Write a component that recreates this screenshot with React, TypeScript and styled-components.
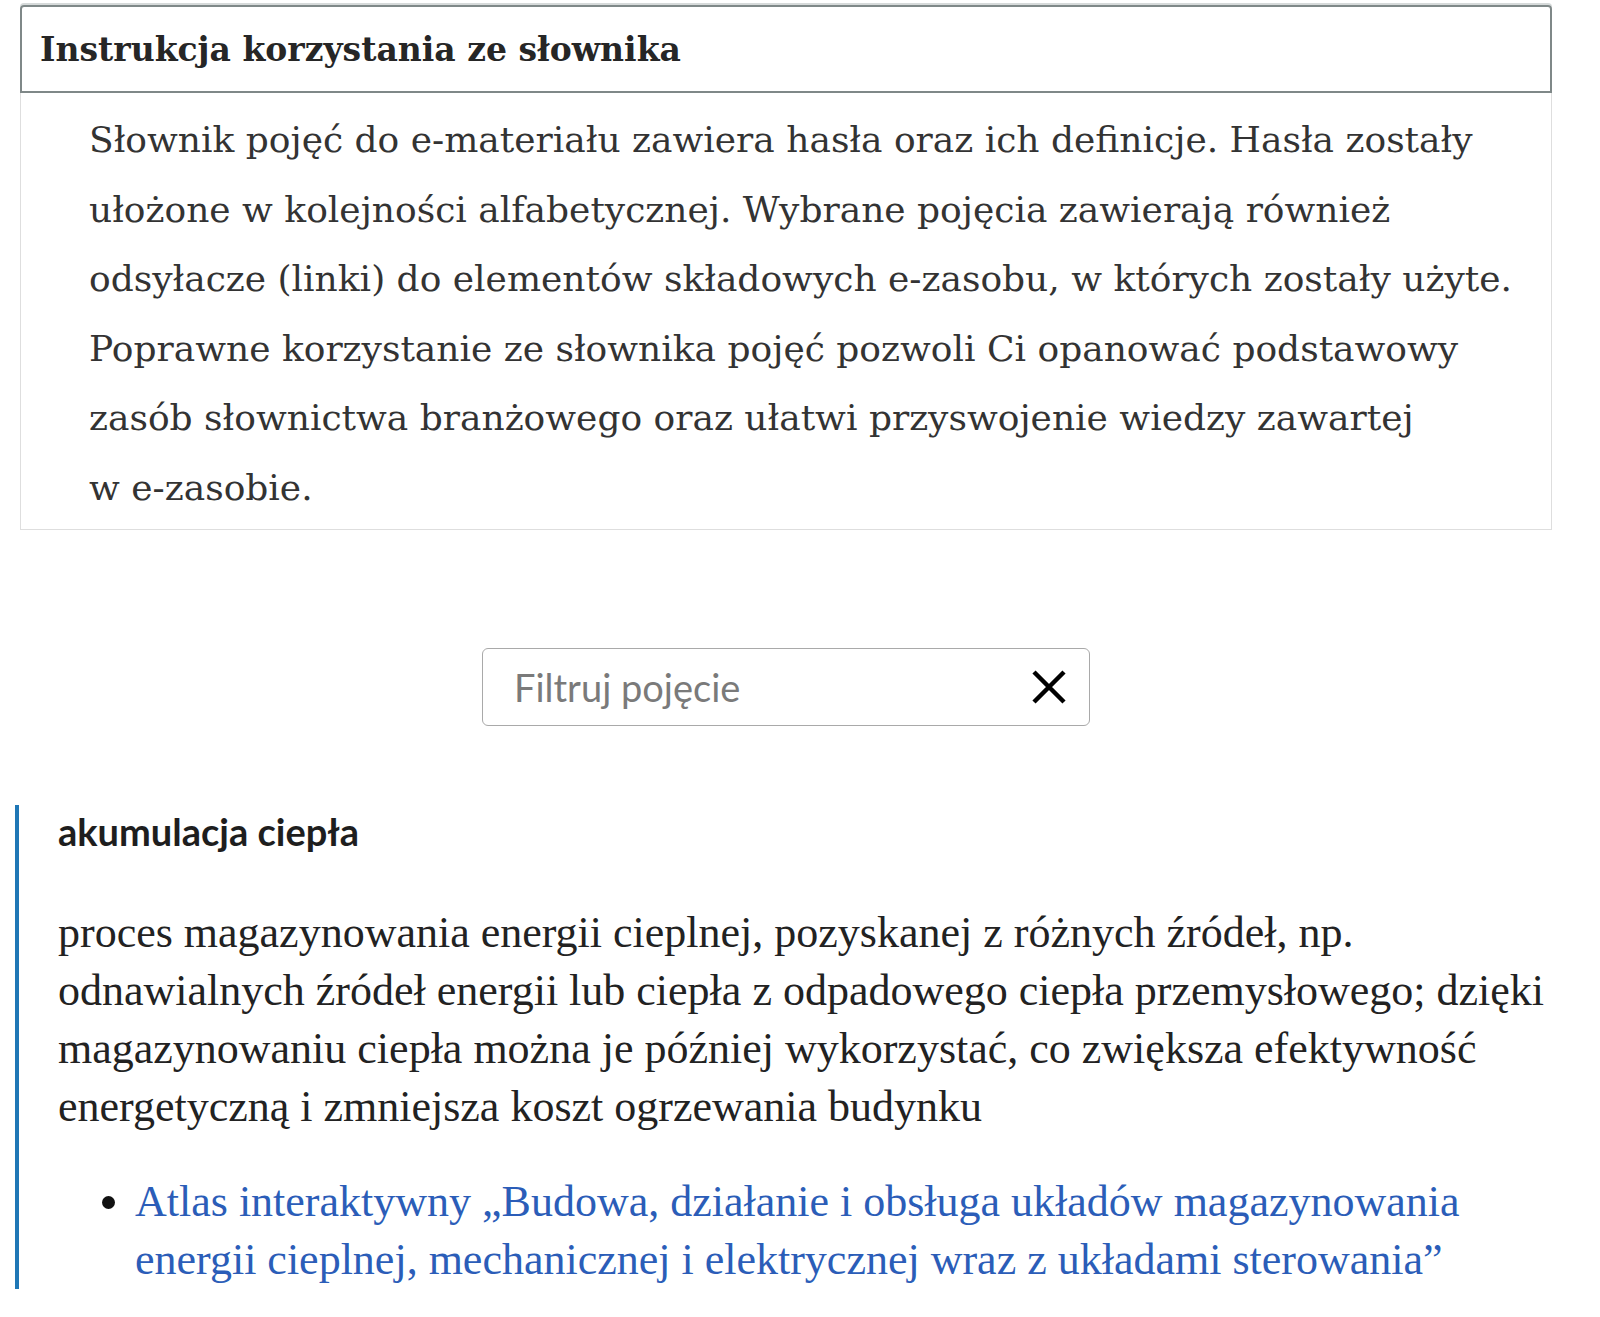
import React from "react";
import styled, { createGlobalStyle } from "styled-components";

const GlobalStyle = createGlobalStyle`
  html, body {
    margin: 0;
    padding: 0;
    background: #ffffff;
  }
  body {
    font-family: "DejaVu Serif", serif;
  }
`;

const Page = styled.main`
  width: 1532px;
  padding: 5px 0 0 20px;
`;

const InfoBox = styled.section`
  display: flex;
  flex-direction: column;
`;

const InfoHeader = styled.h2`
  margin: 0;
  height: 84px;
  display: flex;
  align-items: center;
  padding-left: 18px;
  border: 2px solid #7f8888;
  border-radius: 4px 4px 0 0;
  box-shadow: 0 -2px 0 #d6dada;
  font-family: "DejaVu Serif", serif;
  font-weight: 700;
  font-size: 33px;
  color: #262626;
`;

const InfoBody = styled.div`
  border: 1px solid #dedede;
  border-top: none;
  padding: 12px 10px 7px 68px;
  font-family: "DejaVu Serif", serif;
  font-size: 36px;
  line-height: 69.5px;
  color: #333333;
`;

const FilterRow = styled.div`
  display: flex;
  justify-content: center;
  padding: 118px 0 79px;
`;

const FilterBox = styled.label`
  width: 608px;
  height: 78px;
  box-sizing: border-box;
  border: 1px solid #a9a9a9;
  border-radius: 6px;
  display: flex;
  align-items: center;
  padding: 0 20px 0 29px;
`;

const FilterInput = styled.input`
  flex: 1;
  min-width: 0;
  border: none;
  outline: none;
  background: transparent;
  font-family: Lato, sans-serif;
  font-size: 38px;
  color: #222;
  &::placeholder {
    color: #7a7a7a;
  }
`;

const ClearButton = styled.button`
  border: none;
  background: none;
  padding: 0;
  width: 40px;
  height: 40px;
  display: flex;
  align-items: center;
  justify-content: center;
  cursor: pointer;
`;

const Term = styled.article`
  margin-left: -5px;
  border-left: 4px solid #1f77b6;
  padding: 5px 0 0 39px;
`;

const TermTitle = styled.h3`
  margin: 0;
  font-family: Lato, sans-serif;
  font-weight: 700;
  font-size: 38px;
  line-height: 42px;
  color: #1e1e1e;
`;

const Definition = styled.p`
  margin: 52px 0 0;
  font-family: "Liberation Serif", serif;
  font-size: 44px;
  line-height: 58px;
  color: #222222;
`;

const Links = styled.ul`
  margin: 37px 0 0;
  padding-left: 77px;
  font-family: "Liberation Serif", serif;
  font-size: 44px;
  line-height: 58px;
`;

const LinkItem = styled.li`
  color: #111;
`;

const Anchor = styled.a`
  color: #2b5db8;
  text-decoration: none;
`;

export default function App() {
  return (
    <>
      <GlobalStyle />
      <Page>
        <InfoBox>
          <InfoHeader>Instrukcja korzystania ze słownika</InfoHeader>
          <InfoBody>
            Słownik pojęć do e-materiału zawiera hasła oraz ich definicje. Hasła zostały
            <br />
            ułożone w kolejności alfabetycznej. Wybrane pojęcia zawierają również
            <br />
            odsyłacze (linki) do elementów składowych e-zasobu, w których zostały użyte.
            <br />
            Poprawne korzystanie ze słownika pojęć pozwoli Ci opanować podstawowy
            <br />
            zasób słownictwa branżowego oraz ułatwi przyswojenie wiedzy zawartej
            <br />
            w e-zasobie.
          </InfoBody>
        </InfoBox>

        <FilterRow>
          <FilterBox>
            <FilterInput placeholder="Filtruj pojęcie" />
            <ClearButton aria-label="Wyczyść">
              <svg width="36" height="36" viewBox="0 0 36 36">
                <path d="M3 3 L33 33 M33 3 L3 33" stroke="#000" strokeWidth="4.5" />
              </svg>
            </ClearButton>
          </FilterBox>
        </FilterRow>

        <Term>
          <TermTitle>akumulacja ciepła</TermTitle>
          <Definition>
            proces magazynowania energii cieplnej, pozyskanej z różnych źródeł, np.
            <br />
            odnawialnych źródeł energii lub ciepła z odpadowego ciepła przemysłowego; dzięki
            <br />
            magazynowaniu ciepła można je później wykorzystać, co zwiększa efektywność
            <br />
            energetyczną i zmniejsza koszt ogrzewania budynku
          </Definition>
          <Links>
            <LinkItem>
              <Anchor href="#">
                Atlas interaktywny „Budowa, działanie i obsługa układów magazynowania
                <br />
                energii cieplnej, mechanicznej i elektrycznej wraz z układami sterowania”
              </Anchor>
            </LinkItem>
          </Links>
        </Term>
      </Page>
    </>
  );
}
